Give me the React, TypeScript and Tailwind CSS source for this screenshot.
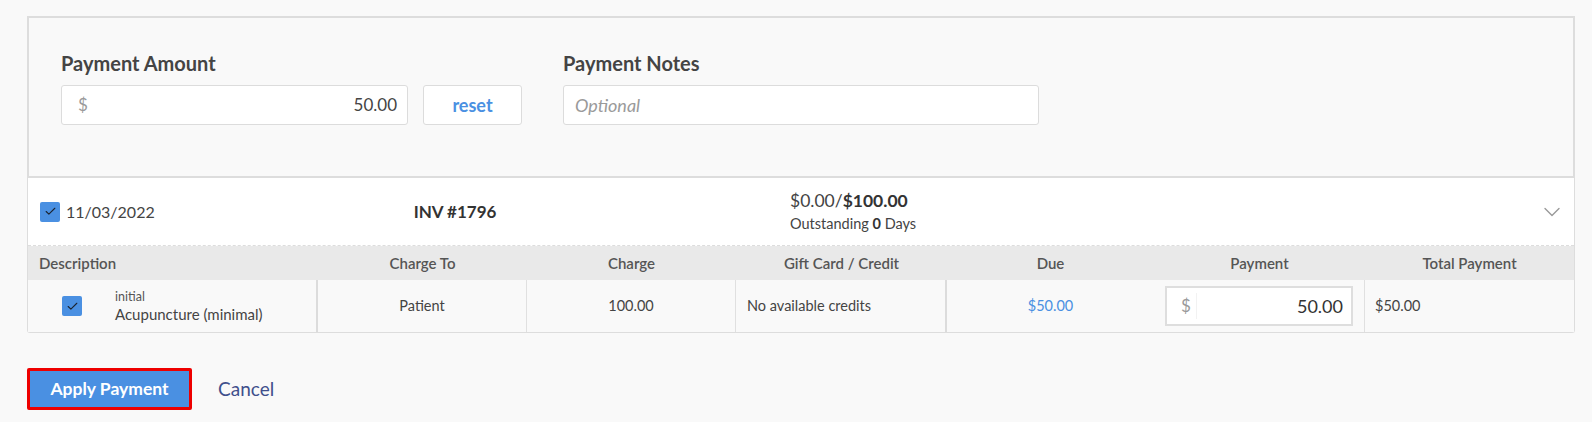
import { ChevronDown, Check } from 'lucide-react';

const font = { fontFamily: 'Lato, "Open Sans", Arial, sans-serif' };

// Blue square checkbox with a dark tick
function Tick() {
  return (
    <div className="flex h-[20px] w-[20px] items-center justify-center rounded-[2px] bg-[#4a90e2]">
      <Check size={13} strokeWidth={2} className="text-[#1c2430]" />
    </div>
  );
}

const headers = ['Description', 'Charge To', 'Charge', 'Gift Card / Credit', 'Due', 'Payment', 'Total Payment'];

export default function App() {
  return (
    <div className="h-[422px] bg-[#f9f9f9] pl-[27px] pr-[17px] pt-[16px] text-[#444]" style={font}>
      {/* Payment amount + notes */}
      <div className="h-[162px] border-2 border-[#dddddd] bg-[#f9f9f9] pl-[32px] pt-[33px]">
        <div className="flex">
          <div>
            <div className="mb-[10px] text-[20px] font-bold leading-[24px] text-[#444]">Payment Amount</div>
            <div className="flex gap-[15px]">
              <div className="flex h-[40px] w-[347px] items-center justify-between rounded-[3px] border border-[#dcdcdc] bg-white pl-[16px] pr-[10px]">
                <span className="text-[17px] text-[#9a9a9a]">$</span>
                <span className="text-[17px] text-[#444]">50.00</span>
              </div>
              <button className="h-[40px] w-[99px] rounded-[3px] border border-[#dcdcdc] bg-white text-[18px] font-bold text-[#4a90e2]">
                reset
              </button>
            </div>
          </div>
          <div className="ml-[41px]">
            <div className="mb-[10px] text-[20px] font-bold leading-[24px] text-[#444]">Payment Notes</div>
            <div className="flex h-[40px] w-[476px] items-center rounded-[3px] border border-[#dcdcdc] bg-white pl-[11px]">
              <span className="text-[18px] italic text-[#9a9a9a]">Optional</span>
            </div>
          </div>
        </div>
      </div>

      {/* Invoice card */}
      <div className="rounded-b-[3px] border border-t-0 border-[#dddddd] bg-white">
        <div className="flex h-[68px] items-center border-b border-dashed border-[#dddddd] pl-[12px] pr-[8px]">
          <div className="flex w-[300px] items-center gap-[6px]">
            <Tick />
            <span className="text-[16px] text-[#444]">11/03/2022</span>
          </div>
          <div className="w-[230px] text-center text-[17px] font-bold text-[#333]">INV #1796</div>
          <div className="ml-[220px] flex flex-col pt-[2px]">
            <span className="text-[17.5px] leading-[22px] text-[#444]">
              $0.00/<b className="text-[#333]">$100.00</b>
            </span>
            <span className="text-[14.5px] leading-[24px] text-[#444]">
              Outstanding <b className="text-[#333]">0</b> Days
            </span>
          </div>
          <div className="ml-auto">
            <ChevronDown size={28} strokeWidth={1.2} className="text-[#999]" />
          </div>
        </div>

        <div className="grid grid-cols-[290px_209px_209px_211px_207px_211px_1fr]">
          {headers.map((h, i) => (
            <div
              key={h}
              className={`flex h-[34px] items-center bg-[#e9e9e9] text-[15px] font-semibold text-[#555] ${
                i === 0 ? 'pl-[11px]' : 'justify-center'
              }`}
            >
              {h}
            </div>
          ))}

          <div className="flex h-[52px] items-center border-r-2 border-[#dcdcdc] bg-[#f9f9f9] pl-[34px]">
            <Tick />
            <div className="ml-[33px] flex flex-col">
              <span className="text-[12.5px] leading-[16px] text-[#555]">initial</span>
              <span className="text-[15px] leading-[19px] text-[#444]">Acupuncture (minimal)</span>
            </div>
          </div>
          <div className="flex items-center justify-center border-r border-[#e0e0e0] bg-[#f9f9f9] text-[14.5px]">Patient</div>
          <div className="flex items-center justify-center border-r border-[#e0e0e0] bg-[#f9f9f9] text-[14.5px]">100.00</div>
          <div className="flex items-center border-r-2 border-[#dcdcdc] bg-[#f9f9f9] pl-[11px] text-[14.5px]">No available credits</div>
          <div className="flex items-center justify-center bg-[#f9f9f9] text-[14.5px] text-[#4a90e2]">$50.00</div>
          <div className="flex items-center justify-center border-r border-[#e0e0e0] bg-[#f9f9f9]">
            <div className="flex h-[40px] w-[188px] items-center border-2 border-[#dedede] bg-white pr-[8px]">
              <span className="w-[30px] border-r border-[#f2f2f2] pl-[14px] text-[17px] text-[#9a9a9a]">$</span>
              <span className="ml-auto text-[18px] text-[#333]">50.00</span>
            </div>
          </div>
          <div className="flex items-center bg-[#f9f9f9] pl-[10px] text-[14.5px]">$50.00</div>
        </div>
      </div>

      {/* Actions */}
      <div className="mt-[35px] flex items-center gap-[26px]">
        <button className="h-[42px] w-[165px] rounded-[2px] border-[3px] border-[#ee0000] bg-[#4a90e2] text-[17.5px] font-bold text-white">
          Apply Payment
        </button>
        <span className="text-[19px] text-[#3f4f8c]">Cancel</span>
      </div>
    </div>
  );
}
